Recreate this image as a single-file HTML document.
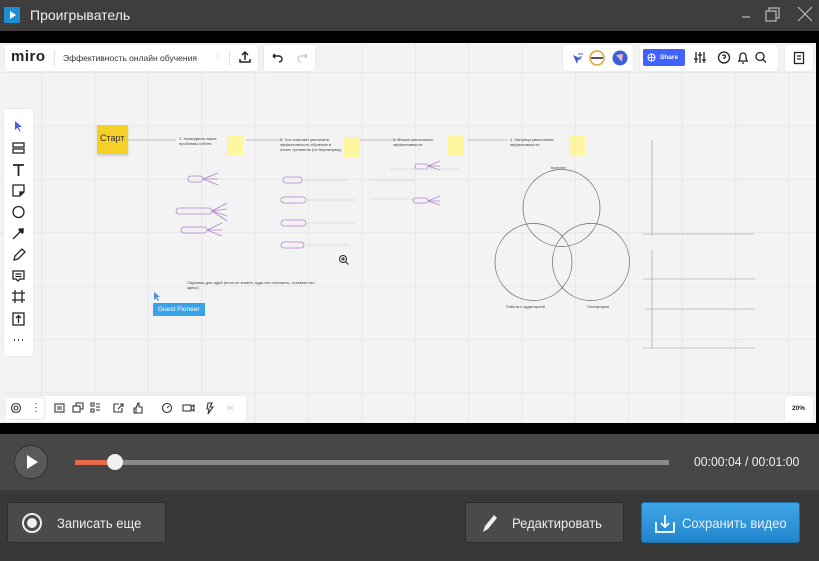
<!DOCTYPE html>
<html><head><meta charset="utf-8"><style>
*{margin:0;padding:0;box-sizing:border-box}
body{width:819px;height:561px;overflow:hidden;background:#383838;font-family:"Liberation Sans",sans-serif;position:relative}
.a{position:absolute}
.panel{position:absolute;background:#fff;border-radius:3px;box-shadow:0 0 2px rgba(0,0,0,.08)}
.t{position:absolute;font-size:4px;color:#444;line-height:5px}
.btn{position:absolute;top:502px;height:41px;border-radius:3px;background:#4a4a4a;border:1px solid #2c2c2c;color:#eee;font-size:14px;display:flex;align-items:center}
.btn span{display:inline-block;transform:scaleX(.93);transform-origin:left center}
</style></head><body>
<div class="a" style="left:0;top:0;width:819px;height:31px;background:#3e3e3e"></div>
<div class="a" style="left:4px;top:7px;width:16px;height:16px;background:#1f8ed8;border-radius:2px"></div>
<svg class="a" style="left:4px;top:7px" width="16" height="16"><path d="M6 4 L12 8 L6 12Z" fill="#fff"/></svg>
<div class="a" style="left:30px;top:7px;color:#f0f0f0;font-size:14px">Проигрыватель</div>
<svg class="a" style="left:730px;top:4px" width="89" height="22" stroke="#bbb" fill="none" stroke-width="1.2">
<path d="M12 13h8"/><rect x="36" y="7" width="10" height="10"/><path d="M39 7V4h10v10h-3"/><path d="M68 3l14 14M82 3L68 17"/></svg>
<div class="a" style="left:0;top:31px;width:819px;height:403px;background:#000"></div>
<div class="a" style="left:0;top:43px;width:816px;height:380px;background-color:#f3f3f3;background-image:linear-gradient(#e8e8e8 1px,transparent 1px),linear-gradient(90deg,#e8e8e8 1px,transparent 1px);background-size:53.4px 53.4px;background-position:41px 29px"></div>
<div class="panel" style="left:5px;top:45px;width:253px;height:26px"></div>
<div class="a" style="left:11px;top:48px;font-size:15px;font-weight:bold;color:#222;letter-spacing:.5px">miro</div>
<div class="a" style="left:54px;top:50px;width:1px;height:16px;background:#e3e3e3"></div>
<div class="a" style="left:63px;top:53px;font-size:8.5px;color:#333">Эффективность онлайн обучения</div>
<div class="a" style="left:214px;top:52px;font-size:8px;color:#ccc">☆</div>
<div class="a" style="left:229px;top:50px;width:1px;height:16px;background:#e3e3e3"></div>
<svg class="a" style="left:238px;top:50px" width="14" height="14" stroke="#222" fill="none" stroke-width="1.5"><path d="M7 10V2M4 5l3-3 3 3M2 9v3h10V9"/></svg>
<div class="panel" style="left:264px;top:45px;width:51px;height:26px"></div>
<svg class="a" style="left:270px;top:52px" width="40" height="12" fill="none" stroke-width="1.4"><path d="M3 4h6a3 3 0 0 1 0 6M3 4l2-2M3 4l2 2" stroke="#222"/><path d="M37 4h-6a3 3 0 0 0 0 6M37 4l-2-2M37 4l-2 2" stroke="#ccc"/></svg>
<div class="panel" style="left:563px;top:45px;width:70px;height:26px"></div>
<svg class="a" style="left:570px;top:49px" width="62" height="18"><path d="M3 6l4 9 1-4 4-1z" fill="#4a5bd6"/><path d="M8 5h5M9 8h3" stroke="#4a5bd6"/><circle cx="27" cy="9" r="7" fill="#fff" stroke="#e0a43a" stroke-width="1.5"/><rect x="21" y="8" width="12" height="2" fill="#555"/><circle cx="50" cy="9" r="7.5" fill="#3b5fd9"/><path d="M46 6l7-1-1 8z" fill="#f5b3c6"/></svg>
<div class="panel" style="left:640px;top:45px;width:138px;height:26px"></div>
<div class="a" style="left:643px;top:49px;width:42px;height:17px;background:#4262ff;border-radius:2px;color:#fff;font-size:6.5px;font-weight:bold;padding:5px 0 0 17px">Share</div>
<svg class="a" style="left:647px;top:53px" width="9" height="9" stroke="#fff" fill="none"><circle cx="4.5" cy="4.5" r="3.5"/><path d="M1 4.5h7M4.5 1v7"/></svg>
<svg class="a" style="left:694px;top:50px" width="80" height="15" stroke="#222" fill="none" stroke-width="1.3"><path d="M2 2v11M6 2v11M10 2v11M0 9h4M4 5h4M8 10h4"/><circle cx="30" cy="7.5" r="5.5"/><path d="M28.5 6a1.5 1.5 0 1 1 1.5 2v1"/><path d="M44 11h10M45 11c1-1 1-3 1-5a3 3 0 0 1 6 0c0 2 0 4 1 5M48 13h2"/><circle cx="66" cy="6.5" r="4"/><path d="M69 9.5l3 3"/></svg>
<div class="panel" style="left:785px;top:45px;width:28px;height:26px"></div>
<svg class="a" style="left:793px;top:51px" width="12" height="14" stroke="#222" fill="none" stroke-width="1.3"><rect x="1.5" y="1.5" width="9" height="11"/><path d="M4 5h4M4 8h4"/></svg>
<div class="panel" style="left:4px;top:109px;width:29px;height:247px"></div>
<svg class="a" style="left:6px;top:112px" width="25" height="242" fill="none" stroke="#222" stroke-width="1.3">
<path d="M9 9l0 9 2.5-2.5 2 4 1-.5-2-4h3.5z" fill="#4a5bd6" stroke="none"/>
<rect x="7" y="31" width="11" height="4"/><rect x="7" y="37" width="11" height="4"/>
<path d="M7 53h11M12.5 53v11" stroke-width="1.8"/>
<path d="M7 73h11v7l-4 4H7z"/><path d="M14 84v-4h4" fill="#222"/>
<circle cx="12.5" cy="100" r="5.5"/>
<path d="M7 127l10-10M13 117h4v4" /><path d="M17 117l-4 1 3 3z" fill="#222"/>
<path d="M8 148l1-4 7-7 3 3-7 7z"/>
<path d="M7 159h11v8h-4l-2 2-2-2H7z"/><path d="M9.5 162h6M9.5 164.5h6"/>
<path d="M9 178v13M16 178v13M6 181h13M6 188h13"/>
<path d="M7 201h11v12H7z"/><path d="M12.5 211v-7M10 206l2.5-2.5L15 206"/>
<path d="M8 228h1M12 228h1M16 228h1" stroke-width="1.8"/>
</svg>
<div class="panel" style="left:4px;top:396px;width:242px;height:26px"></div>
<div class="a" style="left:6px;top:398px;width:38px;height:21px;background:#fff;box-shadow:0 0 3px rgba(0,0,0,.2);border-radius:3px"></div>
<svg class="a" style="left:8px;top:401px" width="230" height="14" fill="none" stroke="#333" stroke-width="1.1">
<circle cx="8" cy="7" r="4.5"/><circle cx="8" cy="7" r="2"/><path d="M28 2v1M28 6v1M28 10v1"/>
<rect x="47" y="3" width="9" height="8"/><path d="M49 6h5M49 8h5"/>
<rect x="65" y="5" width="7" height="6"/><path d="M68 5V2h7v6h-3"/>
<path d="M83 2h3v3h-3zM83 8h3v3h-3zM88 3h4M88 6h4M88 9h4"/>
<path d="M111 3h-5v8h8V7M110 8l5-5M112 3h3v3"/>
<path d="M126 7h2v5h-2zM128 7l2-5h1v4h3v6h-6"/>
<circle cx="159" cy="7" r="4.5"/><path d="M159 7l2-2"/>
<rect x="175" y="4" width="8" height="6"/><path d="M183 6l3-2v6l-3-2"/>
<path d="M200 2h4l-2 4h3l-5 7 1-5h-2z"/>
<path d="M222 5l-2 2 2 2M225 5l-2 2 2 2" stroke="#ccc"/>
</svg>
<div class="panel" style="left:785px;top:396px;width:28px;height:26px"></div>
<div class="a" style="left:792px;top:405px;font-size:6.5px;font-weight:bold;color:#222">20%</div>
<div class="a" style="left:97px;top:125px;width:31px;height:29px;background:#f5d128;box-shadow:0 2px 2px rgba(0,0,0,.15);font-size:9px;color:#333;padding:8px 0 0 3px">Старт</div>
<svg class="a" style="left:0;top:43px" width="816" height="380" fill="none">
<g stroke="#888" stroke-width=".6">
<path d="M128 97h48M246 97h37M360 97h40M468 97h40"/>
</g>
<g stroke="#b080d0" stroke-width=".8">
<rect x="188" y="133" width="15" height="6" rx="3"/><path d="M203 136l15-6M203 136l15 0M203 136l15 6"/>
<rect x="176" y="165" width="36" height="6" rx="3"/><path d="M212 168l15-8M212 168l15-2M212 168l15 5M212 168l15 10"/>
<rect x="181" y="184" width="26" height="6" rx="3"/><path d="M207 187l15-7M207 187l15 0M207 187l15 6"/>
<rect x="283" y="134" width="19" height="6" rx="3"/><rect x="281" y="154" width="25" height="6" rx="3"/>
<rect x="281" y="177" width="25" height="6" rx="3"/><rect x="281" y="199" width="23" height="6" rx="3"/>
<rect x="415" y="121" width="13" height="5" rx="2.5"/><path d="M428 123l12-5M428 123l12 0M428 123l12 4"/>
<rect x="413" y="155" width="15" height="5" rx="2.5"/><path d="M428 158l12-5M428 158l12 0M428 158l12 4"/>
</g>
<g stroke="#ccc" stroke-width=".6"><path d="M302 137h45M306 157h50M306 180h50M304 202h45M390 126h70M370 137h45M370 156h45"/></g>
<g stroke="#666" stroke-width=".7">
<circle cx="561.5" cy="165" r="38.5"/><circle cx="533.5" cy="219" r="38.5"/><circle cx="591" cy="219" r="38.5"/>
</g>
<g stroke="#999" stroke-width=".6">
<path d="M652 97v96M643 191h111M652 207v98M643 236h112M645 266h110M643 305h112"/>
</g>
</svg>
<div class="a" style="left:227px;top:135px;width:16px;height:20px;background:#fff6a0"></div>
<div class="a" style="left:344px;top:137px;width:16px;height:21px;background:#fff6a0"></div>
<div class="a" style="left:448px;top:136px;width:16px;height:20px;background:#fff6a0"></div>
<div class="a" style="left:569px;top:135px;width:16px;height:20px;background:#fff6a0"></div>
<div class="t" style="left:179px;top:136px;width:45px">1. Копандаоть какие проблемы собтех</div>
<div class="t" style="left:280px;top:137px;width:62px">2. Что помогает увеличить эффективность обучения в очных тренингах (по Кирпатрику)</div>
<div class="t" style="left:393px;top:137px;width:50px">3. Фишки увеличения эффективности</div>
<div class="t" style="left:510px;top:137px;width:55px">4. Матрица увеличения эффективности</div>
<div class="t" style="left:551px;top:165px">Контент</div>
<div class="t" style="left:506px;top:304px">Работа с аудиторией</div>
<div class="t" style="left:587px;top:304px">Платформа</div>
<div class="t" style="left:187px;top:280px;width:140px">Парковка для идей (если не знаете, куда это положить, оставьте это здесь)</div>
<svg class="a" style="left:153px;top:291px" width="8" height="10"><path d="M1 1v8l2-2 2 3 1-1-2-3h3z" fill="#4a8fe0"/></svg>
<div class="a" style="left:153px;top:303px;width:52px;height:13px;background:#3aa3e8;color:#fff;font-size:6.5px;padding:3px 0 0 5px">Guest Pioneer</div>
<svg class="a" style="left:338px;top:254px" width="12" height="12" stroke="#222" fill="none"><circle cx="5" cy="5" r="3.5"/><path d="M5 3v4M3 5h4M7.5 7.5l3 3"/></svg>
<div class="a" style="left:0;top:434px;width:819px;height:56px;background:#474747"></div>
<div class="a" style="left:14px;top:445px;width:34px;height:34px;border-radius:50%;background:#5a5a5a;border:1px solid #333"></div>
<svg class="a" style="left:14px;top:445px" width="34" height="34"><path d="M13 10l11 7-11 7z" fill="#fff"/></svg>
<div class="a" style="left:75px;top:460px;width:594px;height:5px;background:#8a8a8a"></div>
<div class="a" style="left:75px;top:460px;width:40px;height:5px;background:#e5694a"></div>
<div class="a" style="left:107px;top:454px;width:16px;height:16px;border-radius:50%;background:#f0f0f0"></div>
<div class="a" style="left:694px;top:454px;color:#f0f0f0;font-size:13px;transform:scaleX(.94);transform-origin:left">00:00:04 / 00:01:00</div>
<div class="btn" style="left:7px;width:159px"><svg style="margin:0 14px 0 13px" width="22" height="22"><circle cx="11" cy="11" r="9" fill="none" stroke="#eee" stroke-width="2"/><circle cx="11" cy="11" r="5" fill="#eee"/></svg><span>Записать еще</span></div>
<div class="btn" style="left:465px;width:159px"><svg style="margin:0 12px 0 14px" width="20" height="22"><path d="M3 20l2-6 9-11 3 3-9 11z" fill="#eee"/></svg><span>Редактировать</span></div>
<div class="btn" style="left:641px;width:159px;background:linear-gradient(#3fa6e6,#2185cc);border-color:#1e6ea8"><svg style="margin:0 6px 0 12px" width="22" height="22" stroke="#fff" fill="none" stroke-width="1.8"><path d="M2 10v10h18V10M11 3v12M7 11l4 4 4-4"/></svg><span>Сохранить видео</span></div>
</body></html>
